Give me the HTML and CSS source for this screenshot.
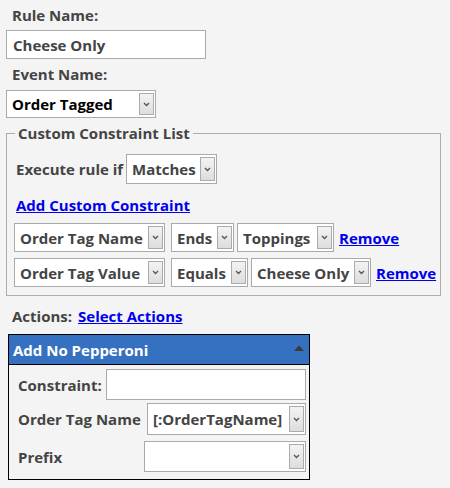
FILE: index.html
```html
<!DOCTYPE html>
<html>
<head>
<meta charset="utf-8">
<link rel="stylesheet" href="styles.css">
</head>
<body>
<div class="page">
  <div class="label">Rule Name:</div>
  <div class="textbox tb-rule"><span class="val">Cheese Only</span></div>
  <div class="label">Event Name:</div>
  <div class="select sel-event"><span class="val black">Order Tagged</span><span class="btn"><svg width="7" height="5" viewBox="0 0 7 5"><path d="M1 1 L3.5 3.5 L6 1" fill="none" stroke="#555" stroke-width="1.3"/></svg></span></div>

  <fieldset class="constraints">
    <legend>Custom Constraint List</legend>
    <div class="exec-row">
      <span class="exec-label">Execute rule if</span>
      <div class="select sel-matches"><span class="val">Matches</span><span class="btn"><svg width="7" height="5" viewBox="0 0 7 5"><path d="M1 1 L3.5 3.5 L6 1" fill="none" stroke="#555" stroke-width="1.3"/></svg></span></div>
    </div>
    <div class="add-row"><a class="link" href="#">Add Custom Constraint</a></div>
    <div class="crow">
      <div class="select s-name"><span class="val">Order Tag Name</span><span class="btn"><svg width="7" height="5" viewBox="0 0 7 5"><path d="M1 1 L3.5 3.5 L6 1" fill="none" stroke="#555" stroke-width="1.3"/></svg></span></div>
      <div class="select s-ends"><span class="val">Ends</span><span class="btn"><svg width="7" height="5" viewBox="0 0 7 5"><path d="M1 1 L3.5 3.5 L6 1" fill="none" stroke="#555" stroke-width="1.3"/></svg></span></div>
      <div class="select s-top"><span class="val">Toppings</span><span class="btn"><svg width="7" height="5" viewBox="0 0 7 5"><path d="M1 1 L3.5 3.5 L6 1" fill="none" stroke="#555" stroke-width="1.3"/></svg></span></div>
      <a class="link" href="#">Remove</a>
    </div>
    <div class="crow">
      <div class="select s-name"><span class="val">Order Tag Value</span><span class="btn"><svg width="7" height="5" viewBox="0 0 7 5"><path d="M1 1 L3.5 3.5 L6 1" fill="none" stroke="#555" stroke-width="1.3"/></svg></span></div>
      <div class="select s-equals"><span class="val">Equals</span><span class="btn"><svg width="7" height="5" viewBox="0 0 7 5"><path d="M1 1 L3.5 3.5 L6 1" fill="none" stroke="#555" stroke-width="1.3"/></svg></span></div>
      <div class="select s-cheese"><span class="val">Cheese Only</span><span class="btn"><svg width="7" height="5" viewBox="0 0 7 5"><path d="M1 1 L3.5 3.5 L6 1" fill="none" stroke="#555" stroke-width="1.3"/></svg></span></div>
      <a class="link" href="#">Remove</a>
    </div>
  </fieldset>

  <div class="actions-row"><span class="actions-label">Actions:</span><a class="link" href="#">Select Actions</a></div>

  <div class="panel">
    <div class="panel-head">
      <span>Add No Pepperoni</span>
      <svg class="tri" width="10" height="6" viewBox="0 0 10 6"><path d="M0 6 L5 0.5 L10 6 Z" fill="#3a3a3a"/></svg>
    </div>
    <div class="panel-body">
      <div class="prow r-con">
        <span class="plabel">Constraint:</span>
        <div class="textbox tb-con"></div>
      </div>
      <div class="prow r-otn">
        <span class="plabel">Order Tag Name</span>
        <div class="select s-otn"><span class="val">[:OrderTagName]</span><span class="btn"><svg width="7" height="5" viewBox="0 0 7 5"><path d="M1 1 L3.5 3.5 L6 1" fill="none" stroke="#555" stroke-width="1.3"/></svg></span></div>
      </div>
      <div class="prow r-pre">
        <span class="plabel">Prefix</span>
        <div class="select s-pre"><span class="val"></span><span class="btn"><svg width="7" height="5" viewBox="0 0 7 5"><path d="M1 1 L3.5 3.5 L6 1" fill="none" stroke="#555" stroke-width="1.3"/></svg></span></div>
      </div>
    </div>
  </div>
</div>
</body>
</html>
```

FILE: styles.css
```css
html, body {
  margin: 0;
  padding: 0;
  background: #f4f4f4;
}
body {
  font-family: "Open Sans", "Noto Sans", "Liberation Sans", sans-serif;
  font-weight: 700;
  font-size: 15px;
  line-height: 20px;
  color: #444;
}
.page {
  width: 450px;
  height: 488px;
  overflow: hidden;
}
.label {
  margin: 5px 0 0 12px;
  height: 20px;
}
.textbox {
  box-sizing: border-box;
  border: 1px solid #aaa;
  background: #fff;
  display: flex;
  align-items: center;
}
.tb-rule {
  margin: 5px 0 0 6px;
  width: 200px;
  height: 29px;
  padding-left: 6px;
}
.select {
  box-sizing: border-box;
  border: 1px solid #aaa;
  background: #fff;
  display: flex;
  align-items: center;
  padding: 2px 1px 2px 5px;
  flex: none;
}
.select .val {
  flex: 1;
  white-space: nowrap;
  overflow: hidden;
}
.select .btn {
  box-sizing: border-box;
  width: 15px;
  height: 100%;
  border: 1px solid #ababab;
  background: linear-gradient(#f3f3f3, #dddddd);
  display: flex;
  align-items: center;
  justify-content: center;
  flex: none;
}
.select .btn svg {
  display: block;
}
.black {
  color: #000;
}
.sel-event {
  margin: 6px 0 0 6px;
  width: 150px;
  height: 28px;
  padding-left: 5px;
}
.constraints {
  margin: 5px 0 0 6px;
  width: 435px;
  box-sizing: border-box;
  border: 1px solid #acacac;
  padding: 0 7px 8px 7px;
  min-width: 0;
}
.constraints legend {
  margin-left: 1px;
  padding: 0 3px;
  line-height: 20px;
}
.exec-row {
  margin-top: 11px;
  display: flex;
  align-items: center;
}
.exec-label {
  margin-left: 2px;
  width: 110px;
  flex: none;
  white-space: nowrap;
}
.sel-matches {
  width: 91px;
  height: 30px;
}
.add-row {
  margin-top: 11px;
  margin-left: 2px;
  height: 20px;
}
.link {
  color: #0000ee;
  text-decoration: underline;
  flex: none;
  white-space: nowrap;
}
.crow {
  margin-top: 8px;
  display: flex;
  align-items: center;
}
.crow + .crow {
  margin-top: 6px;
}
.crow .select {
  height: 29px;
}
.s-name {
  width: 151px;
  margin-right: 6px;
}
.s-ends {
  width: 63px;
  margin-right: 3px;
}
.s-top {
  width: 97px;
  margin-right: 5px;
}
.s-equals {
  width: 77px;
  margin-right: 3px;
}
.s-cheese {
  width: 120px;
  margin-right: 5px;
}
.actions-row {
  margin: 10px 0 0 12px;
  height: 20px;
  display: flex;
}
.actions-label {
  margin-right: 6px;
}
.panel {
  margin: 8px 0 0 8px;
  width: 302px;
  box-sizing: border-box;
  border: 1px solid #000;
}
.panel-head {
  height: 29px;
  background: #3671c1;
  border-bottom: 1px solid #000;
  color: #fff;
  display: flex;
  align-items: center;
  justify-content: space-between;
  padding: 0 5px 0 4px;
}
.tri {
  display: block;
  margin-top: -3px;
}
.panel-body {
  padding: 4px 3px 7px 9px;
}
.prow {
  display: flex;
  align-items: center;
}
.prow .select, .prow .textbox {
  margin-left: auto;
}
.tb-con {
  width: 200px;
  height: 31px;
}
.r-otn {
  margin-top: 3px;
}
.s-otn {
  width: 159px;
  height: 32px;
}
.r-pre {
  margin-top: 6px;
}
.s-pre {
  width: 162px;
  height: 31px;
}
```
